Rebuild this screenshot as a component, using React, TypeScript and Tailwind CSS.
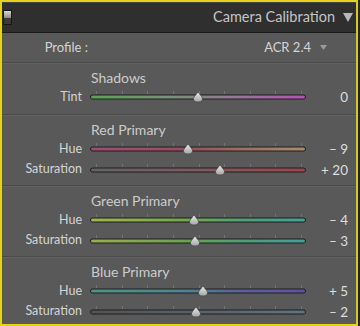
import React from "react";

// one slider row: label, track with ticks + thumb, value
type Row = {
  label: string;
  value: number;
  track: string; // full class for the gradient
};

type Section = {
  title: string;
  rows: Row[];
  height: string;
};

const sections: Section[] = [
  {
    title: "Shadows",
    height: "h-[52px]",
    rows: [
      {
        label: "Tint",
        value: 0,
        track: "bg-[linear-gradient(to_right,#5aa452,#7a927a_35%,#947a94_65%,#b852b8)]",
      },
    ],
  },
  {
    title: "Red Primary",
    height: "h-[71px]",
    rows: [
      {
        label: "Hue",
        value: -9,
        track: "bg-[linear-gradient(to_right,#a24c74,#9a4e5e_45%,#a06e60_70%,#a88e6e)]",
      },
      {
        label: "Saturation",
        value: 20,
        track: "bg-[linear-gradient(to_right,#646464,#805a60_50%,#a0444e)]",
      },
    ],
  },
  {
    title: "Green Primary",
    height: "h-[71px]",
    rows: [
      {
        label: "Hue",
        value: -4,
        track: "bg-[linear-gradient(to_right,#a4b44a,#70aa4c_45%,#4ca27c_75%,#48a29c)]",
      },
      {
        label: "Saturation",
        value: -3,
        track: "bg-[linear-gradient(to_right,#9aae4c,#68a452_45%,#4c9e80_75%,#4a9e9a)]",
      },
    ],
  },
  {
    title: "Blue Primary",
    height: "h-[68px]",
    rows: [
      {
        label: "Hue",
        value: 5,
        track: "bg-[linear-gradient(to_right,#4e9484,#4e8494_45%,#5a609c_70%,#64509e)]",
      },
      {
        label: "Saturation",
        value: -2,
        track: "bg-[linear-gradient(to_right,#525252,#58626a_50%,#5e7486)]",
      },
    ],
  },
];

const formatValue = (v: number) => {
  if (v === 0) return "0";
  return v > 0 ? `+ ${v}` : `– ${Math.abs(v)}`;
};

const Thumb = () => (
  <svg width="11" height="11" viewBox="0 0 11 11">
    <defs>
      <linearGradient id="thumbGrad" x1="0" y1="0" x2="0" y2="1">
        <stop offset="0" stopColor="#ececec" />
        <stop offset="1" stopColor="#a4a4a4" />
      </linearGradient>
    </defs>
    <path
      d="M5.5 0.5 L9.2 5.2 Q10.8 7.2 9.6 9 Q8.4 10.5 5.5 10.5 Q2.6 10.5 1.4 9 Q0.2 7.2 1.8 5.2 Z"
      fill="url(#thumbGrad)"
      stroke="#3a3a3a"
      strokeWidth="0.6"
    />
  </svg>
);

const Slider = ({ row }: { row: Row }) => {
  const pos = 50 + row.value / 2;
  return (
    <div className="relative h-full w-[216px]">
      {/* ticks */}
      <div className="absolute left-[6px] right-[4px] top-[4px] flex justify-between">
        {Array.from({ length: 9 }).map((_, i) => (
          <div key={i} className="h-[3px] w-px bg-[#747474]" />
        ))}
      </div>
      {/* track */}
      <div className="absolute left-0 right-0 top-1/2 -translate-y-1/2 h-[5px] rounded-full border border-[#1e1e1e] bg-[#1e1e1e]">
        <div className={`h-full w-full rounded-full ${row.track}`} />
      </div>
      {/* thumb */}
      <div
        className="absolute top-1/2 -translate-x-1/2 -translate-y-1/2 flex"
        style={{ left: `${pos}%` }}
      >
        <Thumb />
      </div>
    </div>
  );
};

const App = () => {
  return (
    <div
      className="w-[360px] h-[326px] bg-[#262626] overflow-hidden"
      style={{ fontFamily: "Lato, 'Liberation Sans', sans-serif" }}
    >
      <div className="w-[358px] h-[326px] border-2 border-[#e6d21a] border-r-[#d8c820] flex flex-col bg-[#595959]">
        {/* header */}
        <div className="h-[31px] shrink-0 bg-[#2f2f2f] border-b border-[#1a1a1a] shadow-[inset_0_1px_0_#444] flex items-center pl-[1px] pr-[3px]">
          <div className="w-[9px] h-[15px] border border-[#161616] bg-[#3a3a3a] flex flex-col">
            <div className="h-[7px] bg-[linear-gradient(#d8d8d8,#8a8a8a)]" />
          </div>
          <div className="flex-1" />
          <span className="text-[14.5px] text-[#c4c4c4]">Camera Calibration</span>
          <svg width="10" height="9" viewBox="0 0 10 9" className="ml-[8px]">
            <path d="M0 0 L10 0 L5 9 Z" fill="#b8b8b8" />
          </svg>
        </div>

        {/* profile */}
        <div className="h-[29px] shrink-0 flex items-center text-[13px] text-[#d4d4d4]">
          <div className="w-[86px] text-right">Profile :</div>
          <div className="flex-1" />
          <span>ACR 2.4</span>
          <svg width="7" height="5" viewBox="0 0 7 5" className="ml-[9px] mr-[29px]">
            <path d="M0 0 L7 0 L3.5 5 Z" fill="#9a9a9a" />
          </svg>
        </div>

        {sections.map((s) => (
          <div
            key={s.title}
            className={`${s.height} shrink-0 border-t border-[#4a4a4a] shadow-[inset_0_1px_0_#626262] pt-[4px]`}
          >
            <div className="h-[20px] pl-[89px] flex items-center text-[14px] text-[#cccccc]">{s.title}</div>
            {s.rows.map((r) => (
              <div key={r.label} className="h-[20.5px] flex items-center">
                <div className="w-[80px] text-right text-[12.5px] text-[#d4d4d4]">{r.label}</div>
                <div className="w-[8px]" />
                <Slider row={r} />
                <div className="w-[42px] text-right text-[13.5px] text-[#dedede]">{formatValue(r.value)}</div>
              </div>
            ))}
          </div>
        ))}
      </div>
    </div>
  );
};

export default App;
